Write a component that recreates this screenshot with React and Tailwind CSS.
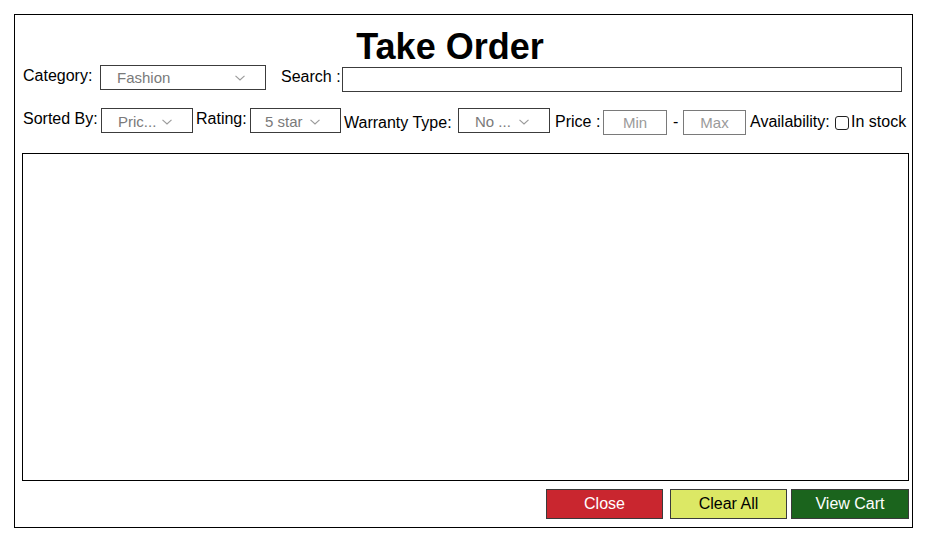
import React from "react";

const font = { fontFamily: '"Liberation Sans", Arial, sans-serif' };

function Chevron() {
  return (
    <svg width="10" height="6" viewBox="0 0 10 6" className="shrink-0">
      <path d="M0.5 0.8 L5 5 L9.5 0.8" fill="none" stroke="#9a9a9a" strokeWidth="1.1" />
    </svg>
  );
}

function Select({ w, pl, text, low }) {
  return (
    <div
      className={`${w} ${pl} ${low ? "pt-[2px]" : ""} h-[25px] shrink-0 border border-[#3c3c3c] flex items-center justify-between pr-[20px] bg-white`}
    >
      <span className="text-[15px] leading-[17px] text-[#7a7a7a] whitespace-nowrap">{text}</span>
      <Chevron />
    </div>
  );
}

export default function App() {
  return (
    <div className="pt-[14px] pl-[14px] bg-white min-h-[540px]" style={font}>
      <div className="w-[899px] h-[514px] border border-black flex flex-col">
        <div className="mt-[14px] h-[36px] text-center pr-[27px] text-[36px] leading-[36px] font-bold text-black">
          Take Order
        </div>

        {/* Row 1 */}
        <div className="flex items-start pl-[8px] text-[16px] leading-[18px] text-black">
          <span className="w-[77px] mt-[2px] whitespace-nowrap">Category:</span>
          <Select w="w-[166px]" pl="pl-[16px]" text="Fashion" />
          <span className="ml-[15px] w-[61px] mt-[3px] whitespace-nowrap">Search :</span>
          <div className="mt-[2px] w-[560px] h-[25px] border border-[#3c3c3c]" />
        </div>

        {/* Row 2 */}
        <div className="mt-[16px] flex items-start pl-[8px] text-[16px] leading-[18px] text-black">
          <span className="w-[78px] mt-[2px] whitespace-nowrap">Sorted By:</span>
          <Select w="w-[92px]" pl="pl-[16px]" text="Pric..." low />
          <span className="ml-[3px] w-[54px] mt-[2px] whitespace-nowrap">Rating:</span>
          <Select w="w-[91px]" pl="pl-[14px]" text="5 star" low />
          <span className="ml-[3px] w-[114px] mt-[6px] whitespace-nowrap">Warranty Type:</span>
          <Select w="w-[92px]" pl="pl-[16px]" text="No ..." low />
          <span className="ml-[5px] w-[48px] mt-[5px] whitespace-nowrap">Price :</span>
          <div className="mt-[2px] w-[64px] h-[25px] shrink-0 border border-[#7a7a7a] flex items-center justify-center text-[15px] leading-[17px] text-[#9a9a9a]">
            Min
          </div>
          <span className="ml-[6px] w-[10px] mt-[5px]">-</span>
          <div className="mt-[2px] w-[63px] h-[25px] shrink-0 border border-[#7a7a7a] flex items-center justify-center text-[15px] leading-[17px] text-[#9a9a9a]">
            Max
          </div>
          <span className="ml-[4px] w-[85px] mt-[5px] whitespace-nowrap">Availability:</span>
          <div className="mt-[8px] w-[14px] h-[14px] shrink-0 border border-[#222] rounded-[3px]" />
          <span className="ml-[2px] mt-[5px] whitespace-nowrap">In stock</span>
        </div>

        {/* Content box */}
        <div className="mt-[18px] ml-[7px] w-[887px] h-[328px] border border-black" />

        {/* Buttons */}
        <div className="mt-[8px] flex justify-end pr-[3px] text-[16px] leading-[18px]">
          <button className="w-[117px] h-[30px] bg-[#c9262f] border border-[#3a3a3a] text-white flex items-center justify-center">
            Close
          </button>
          <button className="ml-[7px] w-[117px] h-[30px] bg-[#dce865] border border-[#3a3a3a] text-black flex items-center justify-center">
            Clear All
          </button>
          <button className="ml-[4px] w-[118px] h-[30px] bg-[#1b641d] border border-[#3a3a3a] text-white flex items-center justify-center">
            View Cart
          </button>
        </div>
      </div>
    </div>
  );
}
